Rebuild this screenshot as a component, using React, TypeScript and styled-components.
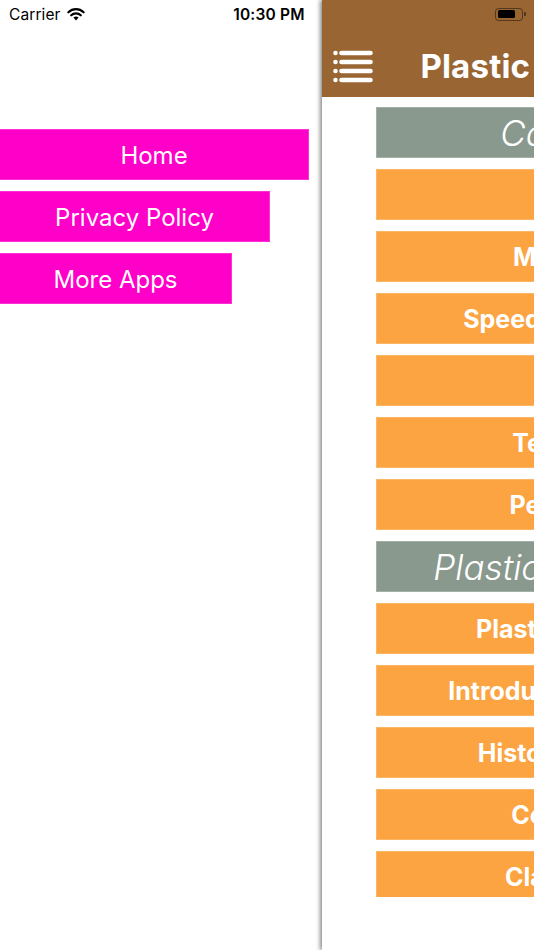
import React from "react";
import styled, { createGlobalStyle } from "styled-components";

const Global = createGlobalStyle`
  html, body { margin: 0; padding: 0; background: #ffffff; }
  body { font-family: Inter, "Noto Sans", "Liberation Sans", sans-serif; }
  * { box-sizing: border-box; }
`;

const Screen = styled.div`
  position: relative;
  width: 534px;
  height: 950px;
  overflow: hidden;
  display: flex;
  background: #ffffff;
`;

const StatusBar = styled.div`
  position: absolute;
  top: 0;
  left: 0;
  right: 0;
  height: 28px;
  display: grid;
  grid-template-columns: 1fr auto 1fr;
  align-items: center;
  padding: 0 8px 0 9px;
  z-index: 5;
  color: #000;
  font-size: 15.5px;
`;

const Carrier = styled.div`
  display: flex;
  align-items: center;
  gap: 6px;
  font-weight: 400;
  letter-spacing: 0.1px;
`;

const Time = styled.div`
  font-weight: 600;
  letter-spacing: 0.2px;
  margin-left: 3px;
`;

const BatteryWrap = styled.div`
  justify-self: end;
  display: flex;
  align-items: center;
  gap: 1px;
`;

const BatteryBody = styled.div`
  width: 28px;
  height: 13px;
  border: 1px solid rgba(0, 0, 0, 0.45);
  border-radius: 3.5px;
  padding: 1.5px;
`;

const BatteryFill = styled.div`
  width: 17px;
  height: 100%;
  background: #000;
  border-radius: 1.5px;
`;

const BatteryNub = styled.div`
  width: 2px;
  height: 4px;
  background: rgba(0, 0, 0, 0.45);
  border-radius: 0 1px 1px 0;
`;

const Drawer = styled.nav`
  width: 322px;
  flex-shrink: 0;
  padding-top: 129px;
  display: flex;
  flex-direction: column;
  gap: 11px;
  background: #ffffff;
`;

const DrawerButton = styled.div<{ $w: number }>`
  width: ${(p) => p.$w}px;
  height: 51px;
  background: #ff00c8;
  color: #ffffff;
  font-size: 24px;
  font-weight: 400;
  display: flex;
  align-items: center;
  justify-content: center;
  padding-top: 1px;
  border: 1px solid #ff30d4;
  border-left: none;
`;

const Main = styled.main`
  width: 534px;
  flex-shrink: 0;
  height: 950px;
  background: #ffffff;
  box-shadow: -2px 0 4px rgba(0, 0, 0, 0.45);
  display: flex;
  flex-direction: column;
  position: relative;
  z-index: 2;
`;

const Header = styled.header`
  height: 97px;
  background: #996633;
  padding: 37px 11px 0 11px;
  display: grid;
  grid-template-columns: 40px 1fr 40px;
  align-items: center;
`;

const MenuIcon = styled.svg`
  width: 40px;
  height: 36px;
  display: block;
`;

const Title = styled.h1`
  margin: 0;
  color: #ffffff;
  font-size: 33px;
  font-weight: 700;
  text-align: center;
  white-space: nowrap;
  letter-spacing: 0.2px;
  margin-top: -2px;
`;

const List = styled.div`
  height: 800px;
  overflow: hidden;
  padding: 10px 54px 0 54px;
  display: flex;
  flex-direction: column;
  gap: 11px;
`;

const Row = styled.div<{ $section?: boolean }>`
  height: 51px;
  flex-shrink: 0;
  background: ${(p) => (p.$section ? "#8a998e" : "#fca441")};
  color: #ffffff;
  display: flex;
  align-items: center;
  justify-content: center;
  white-space: nowrap;
  font-size: ${(p) => (p.$section ? "35px" : "25px")};
  font-weight: ${(p) => (p.$section ? 300 : 700)};
  font-style: ${(p) => (p.$section ? "italic" : "normal")};
  border: 1px solid ${(p) => (p.$section ? "#a3b0a6" : "#fdb566")};
`;

const rows: { label: string; section?: boolean }[] = [
  { label: "Categories", section: true },
  { label: "About" },
  { label: "Mold Design" },
  { label: "Speed of Processing" },
  { label: "Tools" },
  { label: "Terminology" },
  { label: "Performance" },
  { label: "Plastic Engineering", section: true },
  { label: "Plastic & Polymers" },
  { label: "Introduction to Plastics" },
  { label: "History of Plastics" },
  { label: "Composition" },
  { label: "Classification" },
  { label: "Properties" },
];

const Wifi = () => (
  <svg width="18" height="13" viewBox="0 0 18 13">
    <path d="M9 12.6 L6.4 9.6 A3.8 3.8 0 0 1 11.6 9.6 Z" fill="#000" />
    <path
      d="M4.2 7.3 A6.8 6.8 0 0 1 13.8 7.3"
      stroke="#000"
      strokeWidth="2.2"
      fill="none"
      strokeLinecap="round"
    />
    <path
      d="M1.4 4.3 A10.8 10.8 0 0 1 16.6 4.3"
      stroke="#000"
      strokeWidth="2.2"
      fill="none"
      strokeLinecap="round"
    />
  </svg>
);

export default function App() {
  return (
    <Screen>
      <Global />
      <StatusBar>
        <Carrier>
          Carrier
          <Wifi />
        </Carrier>
        <Time>10:30 PM</Time>
        <BatteryWrap>
          <BatteryBody>
            <BatteryFill />
          </BatteryBody>
          <BatteryNub />
        </BatteryWrap>
      </StatusBar>
      <Drawer>
        <DrawerButton $w={309}>Home</DrawerButton>
        <DrawerButton $w={270}>Privacy Policy</DrawerButton>
        <DrawerButton $w={232}>More Apps</DrawerButton>
      </Drawer>
      <Main>
        <Header>
          <MenuIcon viewBox="0 0 40 36">
            {[4, 13, 22, 31].map((y) => (
              <g key={y}>
                <circle cx="2.5" cy={y} r="2.3" fill="#fff" />
                <line
                  x1="8.5"
                  y1={y}
                  x2="37.5"
                  y2={y}
                  stroke="#fff"
                  strokeWidth="4.6"
                  strokeLinecap="round"
                />
              </g>
            ))}
          </MenuIcon>
          <Title>Plastic Technologies</Title>
          <div />
        </Header>
        <List>
          {rows.map((r, i) => (
            <Row key={i} $section={r.section}>
              {r.label}
            </Row>
          ))}
        </List>
      </Main>
    </Screen>
  );
}
